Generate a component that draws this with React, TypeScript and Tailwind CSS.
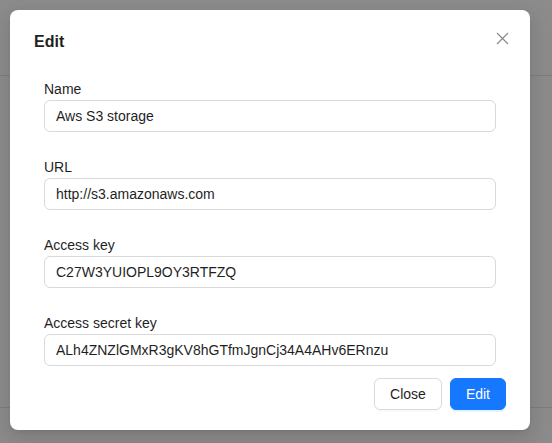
import React from "react";

const fields = [
  { label: "Name", value: "Aws S3 storage" },
  { label: "URL", value: "http://s3.amazonaws.com" },
  { label: "Access key", value: "C27W3YUIOPL9OY3RTFZQ" },
  { label: "Access secret key", value: "ALh4ZNZlGMxR3gKV8hGTfmJgnCj34A4AHv6ERnzu" },
];

export default function App() {
  return (
    <div className="relative w-[552px] h-[443px] overflow-hidden bg-white font-['Liberation_Sans',Arial,sans-serif] text-[#1f1f1f]">
      {/* page behind */}
      <div className="flex flex-col h-full">
        <div className="h-[76px] border-b border-[#e5e5e5]" />
        <div className="flex-1" />
        <div className="h-[36px] border-t border-[#e5e5e5]" />
      </div>
      {/* mask */}
      <div className="absolute inset-0 bg-black/45" />
      {/* modal */}
      <div className="absolute left-[10px] top-[10px] w-[520px] h-[420px] bg-white rounded-lg flex flex-col px-6 pt-5 pb-5 shadow-[0_6px_16px_0_rgba(0,0,0,0.08),0_3px_6px_-4px_rgba(0,0,0,0.12),0_9px_28px_8px_rgba(0,0,0,0.05)]">
        <button className="absolute top-[17px] right-[17px] w-[22px] h-[22px] flex items-center justify-center">
          <svg width="13" height="13" viewBox="0 0 13 13" fill="none">
            <path d="M1 1 L12 12 M12 1 L1 12" stroke="#8c8c8c" strokeWidth="1.2" />
          </svg>
        </button>
        <div className="text-base leading-6 font-semibold mb-2">Edit</div>
        <div className="flex-1 overflow-hidden px-[10px] pt-[16px]">
          <div className="flex flex-col gap-6">
            {fields.map((f) => (
              <div key={f.label} className="flex flex-col">
                <label className="text-sm leading-[22px]">{f.label}</label>
                <input
                  readOnly
                  value={f.value}
                  className="h-8 w-full border border-[#d9d9d9] rounded-md px-[11px] text-sm text-[#1f1f1f] bg-white outline-none"
                />
              </div>
            ))}
          </div>
        </div>
        <div className="mt-3 flex justify-end gap-2">
          <button className="h-8 px-[15px] border border-[#d9d9d9] rounded-md bg-white text-sm text-[#1f1f1f] shadow-[0_2px_0_rgba(0,0,0,0.02)]">
            Close
          </button>
          <button className="h-8 px-[15px] border border-[#1677ff] rounded-md bg-[#1677ff] text-sm text-white shadow-[0_2px_0_rgba(5,145,255,0.1)]">
            Edit
          </button>
        </div>
      </div>
    </div>
  );
}
